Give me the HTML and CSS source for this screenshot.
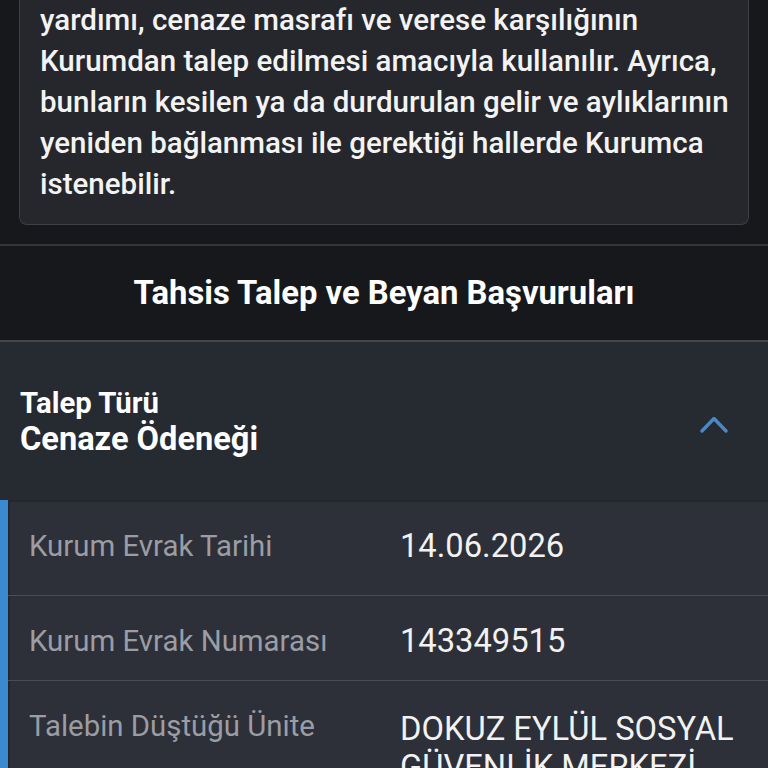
FILE: index.html
```html
<!DOCTYPE html>
<html lang="tr">
<head>
<meta charset="utf-8">
<title>Tahsis Talep ve Beyan Başvuruları</title>
<link rel="stylesheet" href="styles.css">
</head>
<body>
<main class="page">
  <section class="intro">
    <div class="note">
      <p class="note-text">yardımı, cenaze masrafı ve verese karşılığının<br>
      Kurumdan talep edilmesi amacıyla kullanılır. Ayrıca,<br>
      bunların kesilen ya da durdurulan gelir ve aylıklarının<br>
      yeniden bağlanması ile gerektiği hallerde Kurumca<br>
      istenebilir.</p>
    </div>
  </section>

  <h2 class="section-title">Tahsis Talep ve Beyan Başvuruları</h2>

  <section class="accordion">
    <div class="acc-head">
      <div class="acc-heading">
        <div class="acc-label">Talep Türü</div>
        <div class="acc-value">Cenaze Ödeneği</div>
      </div>
      <svg class="chevron" width="28" height="18" viewBox="0 0 28 18" aria-hidden="true">
        <polyline points="2,16 14,3.5 26,16" fill="none" stroke="#4a88c6" stroke-width="3.4" stroke-linecap="round" stroke-linejoin="round"/>
      </svg>
    </div>
    <div class="acc-body">
      <div class="row row-first">
        <div class="row-label">Kurum Evrak Tarihi</div>
        <div class="row-value">14.06.2026</div>
      </div>
      <div class="row">
        <div class="row-label">Kurum Evrak Numarası</div>
        <div class="row-value">143349515</div>
      </div>
      <div class="row">
        <div class="row-label">Talebin Düştüğü Ünite</div>
        <div class="row-value row-value-multi">DOKUZ EYLÜL SOSYAL GÜVENLİK MERKEZİ</div>
      </div>
    </div>
  </section>
</main>
</body>
</html>
```

FILE: styles.css
```css
* { box-sizing: border-box; }

html, body {
  margin: 0;
  padding: 0;
  background: #17181c;
  font-family: Roboto, "Noto Sans", "Liberation Sans", sans-serif;
  color: #f1f1f1;
}

.page {
  width: 768px;
  height: 768px;
  overflow: hidden;
}

.intro {
  padding: 0 19px 19px 19px;
  background: #17181c;
}

.note {
  background: #25272d;
  border: 1px solid #3c3f46;
  border-top: 0;
  border-radius: 0 0 8px 8px;
  padding: 0 8px 19px 20px;
}

.note-text {
  margin: 0;
  font-size: 29.5px;
  font-weight: 500;
  line-height: 41px;
  color: #f3f3f3;
  white-space: nowrap;
}

.section-title {
  margin: 0;
  height: 98px;
  display: flex;
  align-items: center;
  justify-content: center;
  border-top: 2px solid #35363b;
  border-bottom: 2px solid #45474c;
  background: #17181c;
  font-size: 32.8px;
  font-weight: 700;
  color: #ffffff;
}

.accordion {
  background: #262a31;
}

.acc-head {
  height: 158px;
  display: flex;
  align-items: center;
  justify-content: space-between;
  padding: 0 40px 0 20px;
}

.acc-heading {
  display: flex;
  flex-direction: column;
  padding-top: 2px;
}

.acc-label {
  font-size: 29.3px;
  font-weight: 700;
  line-height: 34px;
  color: #ffffff;
}

.acc-value {
  font-size: 32.6px;
  font-weight: 700;
  line-height: 38px;
  color: #ffffff;
}

.chevron {
  display: block;
  margin-top: 6px;
}

.acc-body {
  background: #2d3038;
  border-left: 8px solid #3b8ad0;
  box-shadow: inset 2px 2px 0 #23262c;
}

.row {
  display: grid;
  grid-template-columns: 371px 1fr;
  padding: 26px 20px 20px 21px;
  border-bottom: 1px solid #4a4d55;
}

.row-first {
  padding-top: 27px;
  padding-bottom: 30px;
}

.row-label {
  font-size: 29.4px;
  line-height: 38px;
  color: #9b9da4;
}

.row-value {
  font-size: 32.7px;
  line-height: 38px;
  color: #f2f2f2;
}

.row-value-multi {
  padding-top: 3px;
}
```
